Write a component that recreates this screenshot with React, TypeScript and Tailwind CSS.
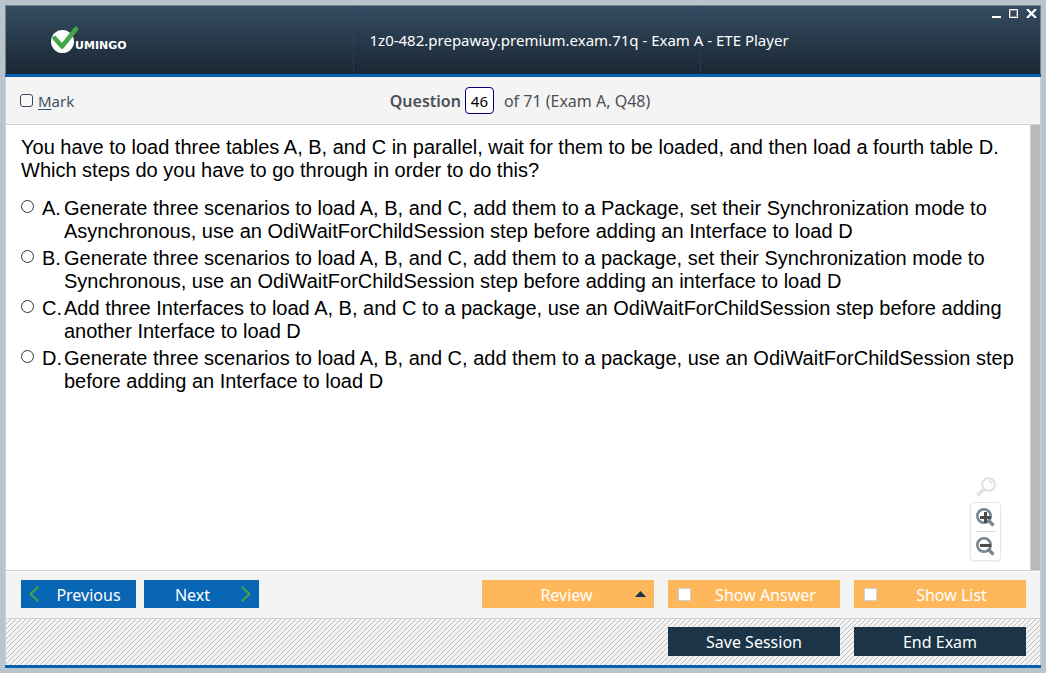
import { useState } from "react";

const options = [
  {
    letter: "A.",
    text: "Generate three scenarios to load A, B, and C, add them to a Package, set their Synchronization mode to Asynchronous, use an OdiWaitForChildSession step before adding an Interface to load D",
  },
  {
    letter: "B.",
    text: "Generate three scenarios to load A, B, and C, add them to a package, set their Synchronization mode to Synchronous, use an OdiWaitForChildSession step before adding an interface to load D",
  },
  {
    letter: "C.",
    text: "Add three Interfaces to load A, B, and C to a package, use an OdiWaitForChildSession step before adding another Interface to load D",
  },
  {
    letter: "D.",
    text: "Generate three scenarios to load A, B, and C, add them to a package, use an OdiWaitForChildSession step before adding an Interface to load D",
  },
];

function Logo() {
  return (
    <div className="flex items-end text-white" aria-label="Vumingo">
      <svg width="28" height="28" viewBox="0 0 28 28" aria-hidden="true">
        <circle cx="11.5" cy="15.5" r="11.5" fill="#fff" />
        <path d="M3.7 12.2 L11 20.5 L25 3" fill="none" stroke="#45a549" strokeWidth="4.6" strokeLinecap="round" strokeLinejoin="round" />
      </svg>
      <span className="-ml-1 pb-[3px] font-['DejaVu_Sans',sans-serif] text-[11px] leading-[10px] font-bold">UMINGO</span>
    </div>
  );
}

function Header() {
  return (
    <header className="grid h-[69px] shrink-0 grid-cols-[minmax(0,1fr)_minmax(0,1fr)_339px] items-center border border-b-0 border-[#728489] bg-linear-to-b from-[#354d62] to-[#1a2734] text-white">
      <div className="flex h-full items-center border-r border-dotted border-[#32418f] pl-[45px]">
        <Logo />
      </div>
      <h1 className="flex h-full items-center border-r border-dotted border-[#32418f] pl-4 text-[15px] whitespace-nowrap">
        <span>1z0-482.prepaway.premium.exam.71q - Exam A - ETE Player</span>
      </h1>
      <div className="flex h-full items-start justify-end gap-2 pt-[3px] pr-[3px]">
        <button type="button" aria-label="Minimize" className="block">
          <svg width="9" height="9" viewBox="0 0 9 9" aria-hidden="true">
            <path d="M0 7h9v2H0z" fill="#fff" />
          </svg>
        </button>
        <button type="button" aria-label="Maximize" className="block">
          <svg width="9" height="9" viewBox="0 0 9 9" aria-hidden="true">
            <path d="M.5.5h8v8h-8z" fill="none" stroke="#fff" />
            <path d="M1.5 1.5h6v6h-6z" fill="none" stroke="#8b847f" />
          </svg>
        </button>
        <button type="button" aria-label="Close" className="block">
          <svg width="11" height="9" viewBox="0 0 11 9" aria-hidden="true">
            <path d="M1 0l9 9M10 0L1 9" fill="none" stroke="#fff" strokeWidth="2.2" />
          </svg>
        </button>
      </div>
    </header>
  );
}

function ZoomControls() {
  return (
    <div className="absolute right-[39px] bottom-[9px] flex w-[31px] flex-col items-center gap-[5px]">
      <svg width="20" height="20" viewBox="0 0 20 20" aria-hidden="true" fill="none" stroke="#dfdfdf">
        <circle cx="12.5" cy="7.5" r="6.3" strokeWidth="2" />
        <path d="M12.5 4a3.6 3.6 0 0 1 3.4 3" strokeWidth="1.4" />
        <path d="M8 12l-6.5 6.5" strokeWidth="3.2" />
      </svg>
      <div className="flex w-[31px] flex-col items-center rounded border border-[#e6e6e6] bg-white shadow-xs">
        <button type="button" aria-label="Zoom in" className="flex h-[29px] items-center border-b border-[#dcdcdc]">
          <svg width="19" height="19" viewBox="0 0 19 19" aria-hidden="true" fill="none">
            <circle cx="8" cy="8" r="6.7" stroke="#788591" strokeWidth="2.6" />
            <path d="M12.5 12.5l5 5" stroke="#788591" strokeWidth="3.2" />
            <path d="M4 9.5h11M9.5 4v11" stroke="#4b4b4b" strokeWidth="3" />
          </svg>
        </button>
        <button type="button" aria-label="Zoom out" className="flex h-7 items-center">
          <svg width="19" height="19" viewBox="0 0 19 19" aria-hidden="true" fill="none">
            <circle cx="8" cy="8" r="6.7" stroke="#788591" strokeWidth="2.6" />
            <path d="M12.5 12.5l5 5" stroke="#788591" strokeWidth="3.2" />
            <path d="M4 8.5h11" stroke="#4b4b4b" strokeWidth="3" />
          </svg>
        </button>
      </div>
    </div>
  );
}

function Toggle({ label }: { label: string }) {
  return (
    <label className="flex h-7 w-[172px] items-center bg-[#ffb75c] pl-2.5 text-white">
      <input type="checkbox" className="size-[13px] shrink-0 appearance-none border border-[#d2d2d2] bg-white" />
      <span className="flex-1 pt-0.5 text-center">{label}</span>
    </label>
  );
}

export default function App() {
  const [answer, setAnswer] = useState("");
  return (
    <div className="flex min-h-screen flex-col bg-[#b9c5cb] p-[5px] font-['Noto_Sans',sans-serif] text-[#4b4f54]">
      <Header />
      <div className="h-[3px] shrink-0 bg-[#0560b0]" />
      <div className="flex flex-1 flex-col border-x border-[#d0d0d0] bg-white">
        <div className="grid h-12 shrink-0 grid-cols-[1fr_auto_1fr] items-center border-b border-[#d0d0d0] bg-[#f4f4f4] pr-5 pl-3.5">
          <label className="flex items-center gap-[5px] text-[15px] text-[#3f5060]">
            <input type="checkbox" className="size-[13px] appearance-none rounded-[3px] border border-[#34495e] bg-white/40" />
            <span className="pt-0.5">
              <span className="underline underline-offset-2">M</span>ark
            </span>
          </label>
          <div className="flex items-center text-[16px]">
            <label htmlFor="question" className="font-semibold">
              Question
            </label>
            <input
              id="question"
              defaultValue="46"
              className="ml-1 h-[27px] w-[29px] rounded border border-[#00007a] bg-white text-center text-[15px] text-black"
            />
            <span className="ml-2.5">of 71 (Exam A, Q48)</span>
          </div>
        </div>
        <main className="relative flex flex-1 border-b border-[#d0d0d0] bg-white font-['Liberation_Sans',Arial,sans-serif] text-[20px] leading-[23px] text-black">
          <div className="flex-1 pt-[11px] pr-3 pl-[15px]">
            <p>
              You have to load three tables A, B, and C in parallel, wait for them to be loaded, and then load a fourth table D.
              <br />
              Which steps do you have to go through in order to do this?
            </p>
            <div className="mt-[15px] flex flex-col gap-1">
              {options.map((o) => (
                <label key={o.letter} className="flex items-start">
                  <input
                    type="radio"
                    name="answer"
                    checked={answer === o.letter}
                    onChange={() => setAnswer(o.letter)}
                    className="mt-[3px] size-[13px] shrink-0 appearance-none rounded-full border border-[#333] bg-white checked:bg-[#333]"
                  />
                  <span className="ml-2 w-[22px] shrink-0">{o.letter}</span>
                  <span>{o.text}</span>
                </label>
              ))}
            </div>
          </div>
          <div className="w-2.5 shrink-0 border-l border-[#d0d0d0] bg-[#bbb9b5]" />
          <ZoomControls />
        </main>
        <div className="mt-px flex h-[47px] shrink-0 items-center border-b border-[#d0d0d0] bg-[#f4f4f4] pr-3.5 pb-0.5 pl-[15px] text-[16px]">
          <button type="button" className="flex h-7 w-[115px] items-center bg-[#0866b5] px-2 text-white">
            <svg width="10" height="16" viewBox="0 0 10 16" aria-hidden="true">
              <path d="M9.3.8L1.5 8l7.8 7.2" fill="none" stroke="#45a549" strokeWidth="2" />
            </svg>
            <span className="flex-1 pt-0.5 pl-2.5">Previous</span>
          </button>
          <button type="button" className="ml-2 flex h-7 w-[115px] items-center bg-[#0866b5] pr-2 text-white">
            <span className="flex-1 pt-0.5 text-center">Next</span>
            <svg width="10" height="16" viewBox="0 0 10 16" aria-hidden="true">
              <path d="M.7.8L8.5 8 .7 15.2" fill="none" stroke="#45a549" strokeWidth="2" />
            </svg>
          </button>
          <div className="ml-auto flex gap-3.5">
            <button type="button" className="flex h-7 w-[172px] items-center bg-[#ffb75c] pr-2 text-white">
              <span className="flex-1 pt-0.5 pl-4 text-center">Review</span>
              <svg width="11" height="6" viewBox="0 0 11 6" aria-hidden="true">
                <path d="M0 6L5.5 0 11 6z" fill="#1b3448" />
              </svg>
            </button>
            <Toggle label="Show Answer" />
            <Toggle label="Show List" />
          </div>
        </div>
        <footer className="flex h-[46px] shrink-0 items-center justify-end gap-3.5 bg-[#f4f4f4] bg-[linear-gradient(135deg,transparent_45%,#bdbdbd_45%,#bdbdbd_55%,transparent_55%)] bg-size-[5px_5px] pr-3.5 pb-0.5 text-[16px] text-white">
          <button type="button" className="h-[29px] w-[172px] bg-[#1b3448] pt-0.5">
            Save Session
          </button>
          <button type="button" className="h-[29px] w-[172px] bg-[#1b3448] pt-0.5">
            End Exam
          </button>
        </footer>
      </div>
      <div className="h-[3px] shrink-0 bg-[#0560b0]" />
    </div>
  );
}
